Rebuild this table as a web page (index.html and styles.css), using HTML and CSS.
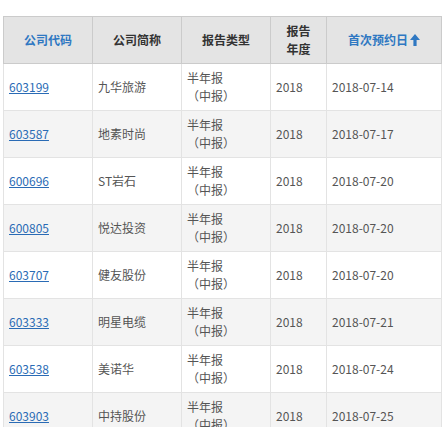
FILE: index.html
```html
<!DOCTYPE html>
<html>
<head>
<meta charset="utf-8">
<link rel="stylesheet" href="styles.css">
</head>
<body>
<table class="grid">
  <colgroup>
    <col class="c1"><col class="c2"><col class="c3"><col class="c4"><col class="c5">
  </colgroup>
  <thead>
    <tr>
      <th class="blue">公司代码</th>
      <th>公司简称</th>
      <th>报告类型</th>
      <th>报告<br>年度</th>
      <th class="blue">首次预约日<svg class="arrow" viewBox="0 0 10 12" width="10" height="12"><polygon points="5,0 10,6 6.6,6 6.6,12 3.4,12 3.4,6 0,6" fill="#2f78c2"/></svg></th>
    </tr>
  </thead>
  <tbody>
    <tr><td><a href="#">603199</a></td><td>九华旅游</td><td>半年报<br>（中报）</td><td>2018</td><td>2018-07-14</td></tr>
    <tr><td><a href="#">603587</a></td><td>地素时尚</td><td>半年报<br>（中报）</td><td>2018</td><td>2018-07-17</td></tr>
    <tr><td><a href="#">600696</a></td><td>ST岩石</td><td>半年报<br>（中报）</td><td>2018</td><td>2018-07-20</td></tr>
    <tr><td><a href="#">600805</a></td><td>悦达投资</td><td>半年报<br>（中报）</td><td>2018</td><td>2018-07-20</td></tr>
    <tr><td><a href="#">603707</a></td><td>健友股份</td><td>半年报<br>（中报）</td><td>2018</td><td>2018-07-20</td></tr>
    <tr><td><a href="#">603333</a></td><td>明星电缆</td><td>半年报<br>（中报）</td><td>2018</td><td>2018-07-21</td></tr>
    <tr><td><a href="#">603538</a></td><td>美诺华</td><td>半年报<br>（中报）</td><td>2018</td><td>2018-07-24</td></tr>
    <tr><td><a href="#">603903</a></td><td>中持股份</td><td>半年报<br>（中报）</td><td>2018</td><td>2018-07-25</td></tr>
  </tbody>
</table>
</body>
</html>
```

FILE: styles.css
```css
html, body {
  margin: 0;
  padding: 0;
  background: #ffffff;
}
body {
  font-family: "Noto Sans CJK SC", "Noto Sans", sans-serif;
  font-size: 12px;
  color: #555555;
}
.grid {
  border-collapse: collapse;
  table-layout: fixed;
  width: 439px;
  margin: 16px 0 0 3px;
}
.c1, .c2, .c3 { width: 89px; }
.c4 { width: 56px; }
.c5 { width: 115px; }
.grid th {
  background: #e4e4e4;
  border: 1px solid #cbcbcb;
  color: #333333;
  font-weight: bold;
  line-height: 18px;
  padding: 5px;
  height: 36px;
  text-align: center;
}
.grid th.blue { color: #2f78c2; }
.arrow {
  vertical-align: -1px;
  margin-left: 2px;
}
.grid td {
  border: 1px solid #e3e3e3;
  line-height: 18px;
  padding: 5px;
  height: 36px;
  text-align: left;
  vertical-align: middle;
}
.grid tbody tr:nth-child(even) td { background: #f4f4f4; }
.grid a {
  color: #2a6bb5;
  text-decoration: underline;
}
```
